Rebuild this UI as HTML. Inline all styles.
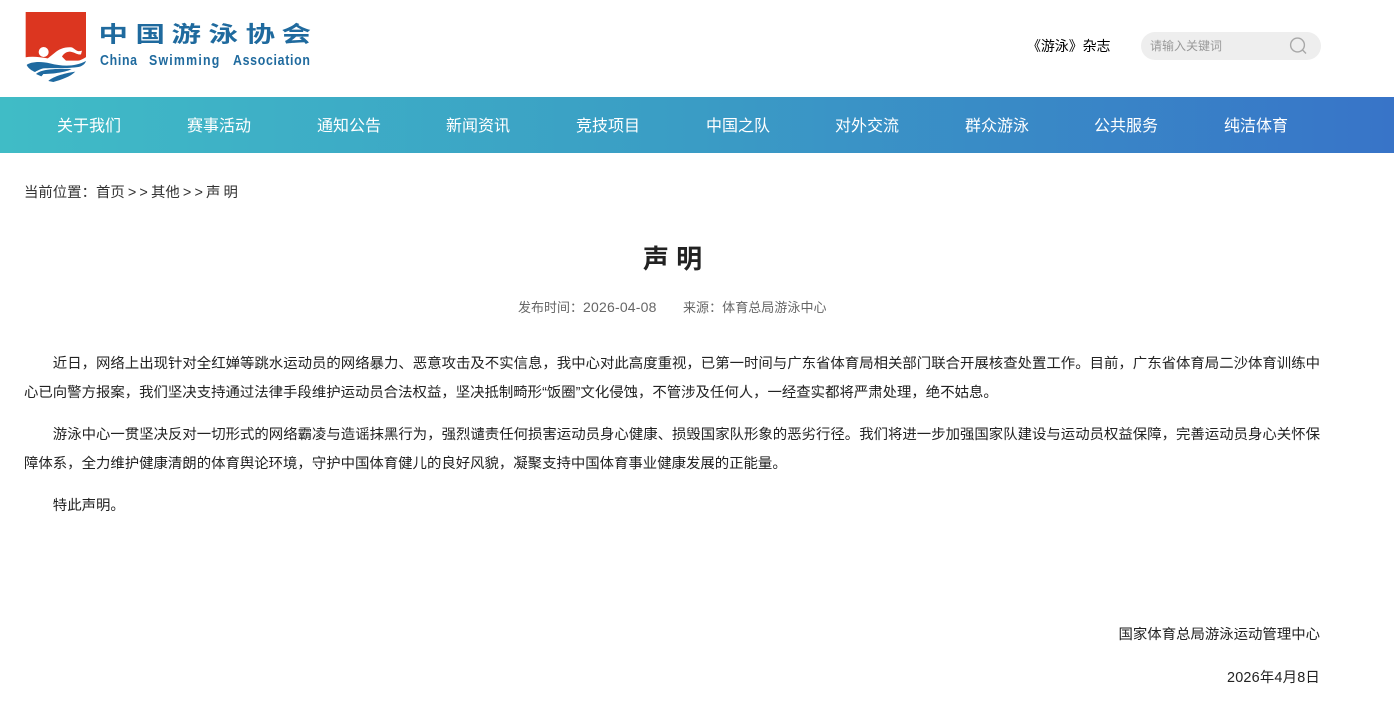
<!DOCTYPE html>
<html lang="zh-CN"><head><meta charset="utf-8"><title>声明</title>
<style>
*{margin:0;padding:0;box-sizing:border-box}
html,body{width:1394px;height:708px;overflow:hidden;background:#fff}
body{font-family:"Liberation Sans","Noto Sans CJK SC",sans-serif;font-size:14.4px;color:#222;position:relative}
.a{position:absolute;white-space:nowrap}
#nav{position:absolute;left:0;top:97px;width:1394px;height:56px;background:linear-gradient(90deg,#40bcc6 0%,#3a9cc5 50%,#3874c8 100%)}
#nav span{position:absolute;top:0;line-height:60px;font-size:16px;color:#fff;white-space:nowrap}
p{position:absolute;left:24px;width:1296px;line-height:29px;text-indent:28.8px;text-align:justify;color:#222}
</style></head><body>
<svg class="a" style="left:0;top:0" width="330" height="96" viewBox="0 0 330 96">
<g transform="scale(.33333)">
<path d="M77 36H258V182H77Z" fill="#dc3620"/>
<path d="M75 172C110 166 150 176 190 186C215 190 240 184 260 170V192C240 215 180 250 155 250C120 240 85 215 75 192Z" fill="#fff"/>
<circle cx="131" cy="156" r="15" fill="#fff"/>
<path d="M135 182L165 158C175 148 195 140 215 142C225 145 230 158 246 152L243 163C232 166 222 155 208 155C198 156 190 162 186 170L202 186Z" fill="#fff"/>
<path d="M80 195C90 186 120 183 150 190C190 200 225 200 258 183C256 190 250 196 240 200C215 206 160 204 130 205C118 208 110 213 105 216C95 212 85 205 80 195Z" fill="#1f6aa0"/>
<path d="M108 222C122 210 150 205 215 207C200 216 160 222 130 222C128 225 126 227 124 229Z" fill="#1f6aa0"/>
<path d="M145 243C155 232 190 220 226 215C212 230 182 240 160 246Z" fill="#1f6aa0"/>
</g>
<g fill="#1f6a9e" font-family="'Noto Sans CJK SC',sans-serif" font-size="22" font-weight="700">
<text transform="translate(98.500 42) scale(1.34 1)">中</text>
<text transform="translate(135.500 42) scale(1.34 1)">国</text>
<text transform="translate(171.500 42) scale(1.34 1)">游</text>
<text transform="translate(208.500 42) scale(1.34 1)">泳</text>
<text transform="translate(245.500 42) scale(1.34 1)">协</text>
<text transform="translate(281.500 42) scale(1.34 1)">会</text>
</g>
<g fill="#1f6a9e" font-family="'Liberation Sans',sans-serif" font-size="13" font-weight="700">
<text transform="translate(100 65) scale(.95 1.1)" textLength="39" lengthAdjust="spacing">China</text>
<text transform="translate(149 65) scale(.95 1.1)" textLength="74" lengthAdjust="spacing">Swimming</text>
<text transform="translate(233 65) scale(.95 1.1)" textLength="81" lengthAdjust="spacing">Association</text>
</g>
</svg>
<div class="a" style="left:1027px;top:36px;line-height:20px;color:#000;font-size:14px;letter-spacing:-.1px">《游泳》杂志</div>
<div class="a" style="left:1141px;top:32px;width:180px;height:28px;border-radius:14px;background:#eee"></div>
<div class="a" style="left:1150px;top:36px;line-height:20px;font-size:12px;color:#999">请输入关键词</div>
<svg class="a" style="left:1288px;top:35px" width="24" height="22" viewBox="0 0 24 22" fill="none" stroke="#a8a8a8" stroke-width="1.400"><circle cx="9.500" cy="10" r="6.900"/><path d="M14.600 15L18 18.500"/></svg>
<div id="nav">
<span style="left:57px">关于我们</span><span style="left:187px">赛事活动</span><span style="left:317px">通知公告</span><span style="left:446px">新闻资讯</span><span style="left:576px">竞技项目</span><span style="left:706px">中国之队</span><span style="left:835px">对外交流</span><span style="left:965px">群众游泳</span><span style="left:1094px">公共服务</span><span style="left:1224px">纯洁体育</span>
</div>
<div class="a" style="left:24px;top:183px;line-height:20px;color:#333;word-spacing:-.85px">当前位置：首页 &gt; &gt; 其他 &gt; &gt; 声 明</div>
<div class="a" style="left:0;width:1345px;text-align:center;top:240px;line-height:38px;font-size:26px;font-weight:700;color:#222">声 明</div>
<div class="a" style="left:518px;top:297px;line-height:20px;font-size:13px;color:#666">发布时间：<span style="font-size:14px;letter-spacing:.2px">2026-04-08</span></div>
<div class="a" style="left:683px;top:298px;line-height:20px;font-size:13px;color:#666;letter-spacing:.05px">来源：体育总局游泳中心</div>
<p style="top:350px">近日，网络上出现针对全红婵等跳水运动员的网络暴力、恶意攻击及不实信息，我中心对此高度重视，已第一时间与广东省体育局相关部门联合开展核查处置工作。目前，广东省体育局二沙体育训练中心已向警方报案，我们坚决支持通过法律手段维护运动员合法权益，坚决抵制畸形“饭圈”文化侵蚀，不管涉及任何人，一经查实都将严肃处理，绝不姑息。</p>
<p style="top:421px">游泳中心一贯坚决反对一切形式的网络霸凌与造谣抹黑行为，强烈谴责任何损害运动员身心健康、损毁国家队形象的恶劣行径。我们将进一步加强国家队建设与运动员权益保障，完善运动员身心关怀保障体系，全力维护健康清朗的体育舆论环境，守护中国体育健儿的良好风貌，凝聚支持中国体育事业健康发展的正能量。</p>
<p style="top:492px">特此声明。</p>
<div class="a" style="right:74px;top:625px;line-height:20px">国家体育总局游泳运动管理中心</div>
<div class="a" style="right:74px;top:668px;line-height:20px;letter-spacing:.2px">2026年4月8日</div>
</body></html>
